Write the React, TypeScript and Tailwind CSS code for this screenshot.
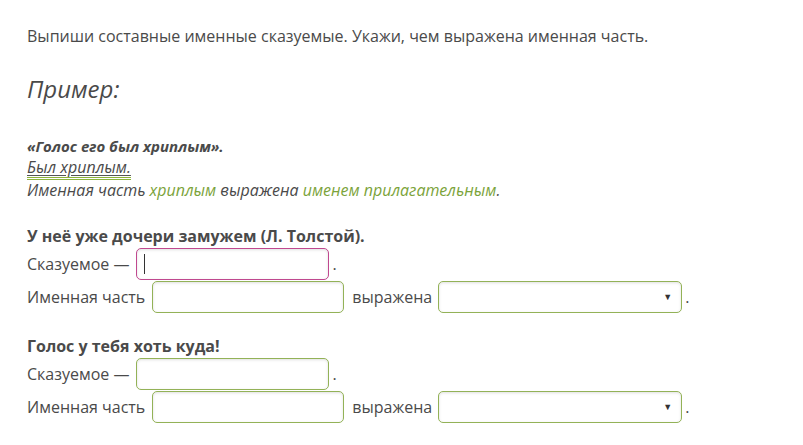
const field = 'h-[32px] rounded-[5px] border border-[#93b257] bg-white shadow-[inset_0_1px_3px_rgba(0,0,0,0.12)]';

function Select() {
  return (
    <div className={`${field} w-[244px] flex items-center justify-end pr-[9px]`}>
      <span className="text-[9px] leading-none text-[#333]">▼</span>
    </div>
  );
}

function Task({ title, focused, className }: { title: string; focused?: boolean; className: string }) {
  return (
    <div className={className}>
      <p className="font-bold text-[16px] leading-[22px]">{title}</p>
      <div className="flex items-center h-[33px]">
        <span>Сказуемое —</span>
        <div
          className={
            focused
              ? 'ml-[7px] h-[32px] w-[193px] rounded-[5px] border border-[#c0488f] bg-white flex items-center pl-[7px] shadow-[inset_0_1px_3px_rgba(0,0,0,0.12)]'
              : `ml-[7px] ${field} w-[193px]`
          }
        >
          {focused && <span className="w-px h-[20px] bg-[#333]" />}
        </div>
        <span className="ml-[3px]">.</span>
      </div>
      <div className="flex items-center h-[33px]">
        <span>Именная часть</span>
        <div className={`ml-[7px] ${field} w-[192px]`} />
        <span className="ml-[8px]">выражена</span>
        <div className="ml-[6px]">
          <Select />
        </div>
        <span className="ml-[3px]">.</span>
      </div>
    </div>
  );
}

export default function App() {
  return (
    <div className="min-h-screen bg-white text-[#4a4a4a] px-[27px] pt-[24px] text-[16px] leading-[24px] font-['Open_Sans',sans-serif]">
      <p>Выпиши составные именные сказуемые. Укажи, чем выражена именная часть.</p>

      <h2 className="mt-[25px] italic text-[24px] leading-[32px]">Пример:</h2>

      {/* Example */}
      <div className="mt-[31px] italic text-[16px] leading-[21px]">
        <p className="font-bold text-[15px]">«Голос его был хриплым».</p>
        <p>
          <span className="inline-block leading-[20px] border-b-[3px] border-double border-[#8db33a]">
            <span className="underline decoration-[#555] underline-offset-[2px]">Был хриплым.</span>
          </span>
        </p>
        <p>
          Именная часть <span className="text-[#7ba33a]">хриплым</span> выражена{' '}
          <span className="text-[#7ba33a]">именем прилагательным</span>.
        </p>
      </div>

      <Task className="mt-[24px]" title="У неё уже дочери замужем (Л. Толстой)." focused />
      <Task className="mt-[22px]" title="Голос у тебя хоть куда!" />
    </div>
  );
}
